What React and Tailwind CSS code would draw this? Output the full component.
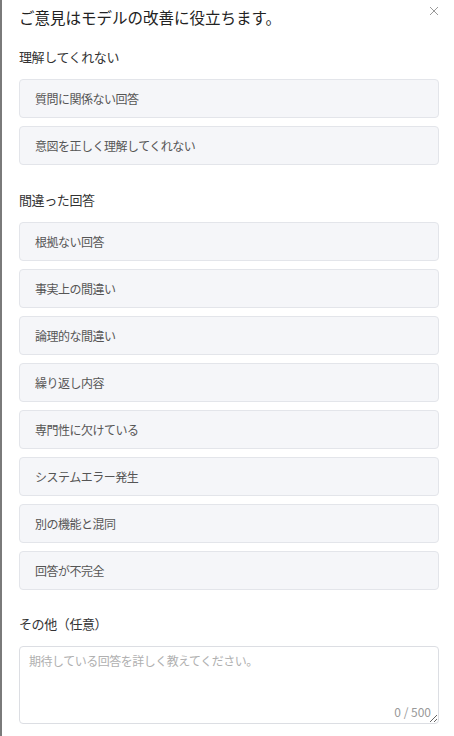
import React, { useState } from 'react';

const groups = [
  {
    title: '理解してくれない',
    items: ['質問に関係ない回答', '意図を正しく理解してくれない'],
  },
  {
    title: '間違った回答',
    items: [
      '根拠ない回答',
      '事実上の間違い',
      '論理的な間違い',
      '繰り返し内容',
      '専門性に欠けている',
      'システムエラー発生',
      '別の機能と混同',
      '回答が不完全',
    ],
  },
];

const App = () => {
  const [selected, setSelected] = useState([]);
  const [text, setText] = useState('');

  const toggle = (item) => {
    setSelected((prev) =>
      prev.includes(item) ? prev.filter((i) => i !== item) : [...prev, item]
    );
  };

  return (
    <div className="w-[454px] h-[736px] bg-white border-l-2 border-[#7a7a7a] overflow-hidden font-['Noto_Sans_CJK_JP','Noto_Sans',sans-serif]">
      <div className="relative pl-[17px] pr-[15px] pt-[5px]">
        <h2 className="text-[15.5px] leading-[24px] text-[#222]">
          ご意見はモデルの改善に役立ちます。
        </h2>
        <button className="absolute right-[14px] top-[5px] w-[12px] h-[12px] flex items-center justify-center">
          <svg width="10" height="10" viewBox="0 0 10 10" stroke="#9a9a9a" strokeWidth="1">
            <path d="M1 1L9 9M9 1L1 9" />
          </svg>
        </button>

        {groups.map((group, gi) => (
          <div key={group.title}>
            <p
              className={`text-[13px] leading-[20px] text-[#333] mb-[12px] tracking-[-0.4px] ${
                gi === 0 ? 'mt-[18px]' : 'mt-[25px]'
              }`}
            >
              {group.title}
            </p>
            <div className="flex flex-col gap-[8px]">
              {group.items.map((item) => (
                <button
                  key={item}
                  onClick={() => toggle(item)}
                  className={`h-[39px] w-full rounded-[4px] border text-left pl-[15px] text-[12px] tracking-[-0.5px] ${
                    selected.includes(item)
                      ? 'border-[#4f7cff] bg-[#eef3ff] text-[#3a64e0]'
                      : 'border-[#e3e5ea] bg-[#f5f6f9] text-[#555]'
                  }`}
                >
                  {item}
                </button>
              ))}
            </div>
          </div>
        ))}

        <p className="text-[13px] leading-[20px] text-[#333] mt-[24px] mb-[12px] tracking-[-0.4px]">その他（任意）</p>
        <div className="relative">
          <textarea
            value={text}
            maxLength={500}
            onChange={(e) => setText(e.target.value)}
            placeholder="期待している回答を詳しく教えてください。"
            className="block w-full h-[78px] rounded-[4px] border border-[#dcdee3] px-[9px] py-[5px] text-[12px] leading-[18px] text-[#333] placeholder:text-[#b0b0b0] outline-none resize tracking-[-0.5px]"
          />
          <span className="absolute right-[8px] bottom-[3px] text-[12px] text-[#999]">
            {text.length} / 500
          </span>
        </div>
      </div>
    </div>
  );
};

export default App;
